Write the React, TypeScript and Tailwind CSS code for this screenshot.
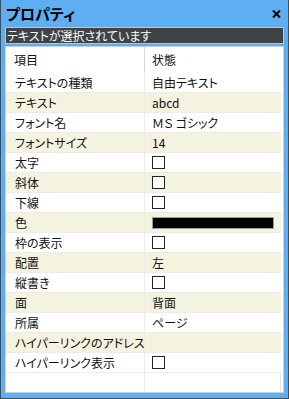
import React from "react";

type Row = { label: string; kind: "text" | "check" | "color" | "empty"; value?: string };

const rows: Row[] = [
  { label: "テキストの種類", kind: "text", value: "自由テキスト" },
  { label: "テキスト", kind: "text", value: "abcd" },
  { label: "フォント名", kind: "text", value: "ＭＳ ゴシック" },
  { label: "フォントサイズ", kind: "text", value: "14" },
  { label: "太字", kind: "check" },
  { label: "斜体", kind: "check" },
  { label: "下線", kind: "check" },
  { label: "色", kind: "color" },
  { label: "枠の表示", kind: "check" },
  { label: "配置", kind: "text", value: "左" },
  { label: "縦書き", kind: "check" },
  { label: "面", kind: "text", value: "背面" },
  { label: "所属", kind: "text", value: "ページ" },
  { label: "ハイパーリンクのアドレス", kind: "empty" },
  { label: "ハイパーリンク表示", kind: "check" },
];

const font = "font-['Noto_Sans_CJK_JP','Noto_Sans',sans-serif] [font-feature-settings:'palt']";

const Value = ({ row }: { row: Row }) => {
  if (row.kind === "check")
    return <div className="w-[13px] h-[13px] border border-[#222] bg-white" />;
  if (row.kind === "color")
    return <div className="w-[122px] h-[12px] border border-[#9a9a9a] bg-black" />;
  if (row.kind === "empty") return null;
  return <span>{row.value}</span>;
};

const App = () => {
  return (
    <div className={`w-[289px] h-[399px] bg-[#5eaef2] border-x border-b border-[#4b4b4b] flex flex-col ${font}`}>
      {/* title */}
      <div className="h-[27px] flex items-center justify-between pl-[5px] pr-[6px]">
        <p className="text-[15px] font-bold text-black leading-none">プロパティ</p>
        <svg width="9" height="8" viewBox="0 0 9 8" className="mr-[1px]">
          <path d="M1 0.5 L8 7.5 M8 0.5 L1 7.5" stroke="black" strokeWidth="2" />
        </svg>
      </div>
      {/* selection bar */}
      <div className="mx-[4px] h-[17px] bg-[#3e4347] border border-[#c4c4c4] flex items-center px-[1px]">
        <span className="text-[12px] text-white leading-none">テキストが選択されています</span>
      </div>
      {/* property grid */}
      <div className="mx-[4px] mt-[2px] mb-[5px] flex-1 bg-white border border-[#cfcfcf] pr-[2px] text-[12px] text-[#111] flex flex-col">
        <div className="h-[26px] flex">
          <div className="w-[138px] pl-[8px] flex items-center">項目</div>
          <div className="flex-1 pl-[7px] flex items-center border-l border-[#d6d6d6]">状態</div>
        </div>
        {rows.map((row, idx) => (
          <div
            key={idx}
            className={`h-[20px] flex border-b border-[#ececec] ${idx % 2 === 1 ? "bg-[#f3f3df]" : "bg-white"}`}
          >
            <div className="w-[138px] pl-[9px] flex items-center whitespace-nowrap">{row.label}</div>
            <div className="flex-1 pl-[7px] flex items-center border-l border-[#ececec]">
              <Value row={row} />
            </div>
          </div>
        ))}
        <div className="flex-1 flex border-r border-[#e4e4e4]">
          <div className="w-[138px]" />
          <div className="flex-1 border-l border-[#ececec]" />
        </div>
      </div>
    </div>
  );
};

export default App;
